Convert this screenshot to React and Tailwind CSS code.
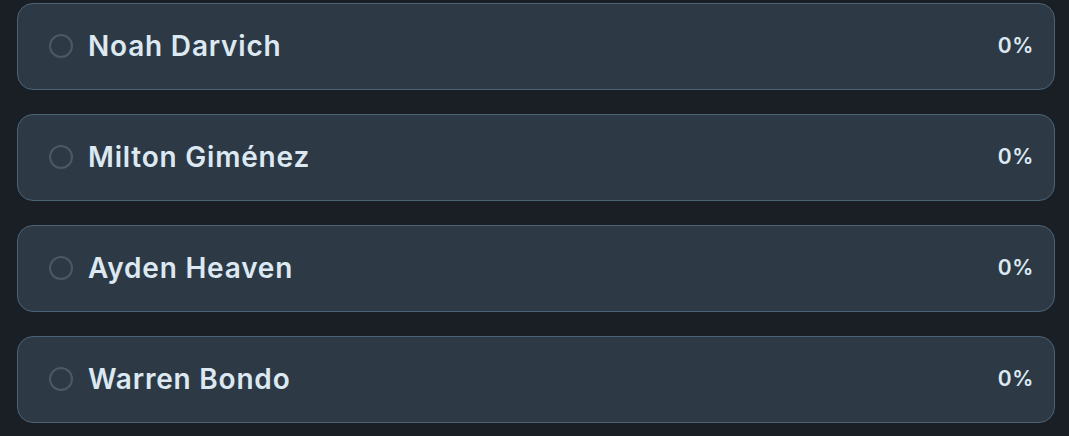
import React from 'react';

const players = [
    { name: 'Noah Darvich', pct: 0 },
    { name: 'Milton Giménez', pct: 0 },
    { name: 'Ayden Heaven', pct: 0 },
    { name: 'Warren Bondo', pct: 0 },
];

const App = () => {
    return (
        <div
            className="min-h-screen bg-[#1a1f26] pl-[17px] pr-[14px] pt-[3px]"
            style={{ fontFamily: 'Inter, "Noto Sans", sans-serif' }}
        >
            <div className="flex flex-col gap-[24px]">
                {players.map((p) => (
                    <button
                        key={p.name}
                        className="flex h-[87px] w-full items-center justify-between rounded-[16px] border border-[#4c6376] bg-[#2d3a46] pb-[1px] pl-[31px] pr-[20px] text-left"
                    >
                        <span className="flex items-center gap-[15px]">
                            <span className="h-[24px] w-[24px] rounded-full border-2 border-[#4d5864]" />
                            <span className="text-[28px] font-semibold tracking-[0.8px] text-[#dce9f3]">
                                {p.name}
                            </span>
                        </span>
                        <span className="text-[21px] font-semibold tracking-[0.6px] text-[#dce9f3]">{p.pct}%</span>
                    </button>
                ))}
            </div>
        </div>
    );
};

export default App;
